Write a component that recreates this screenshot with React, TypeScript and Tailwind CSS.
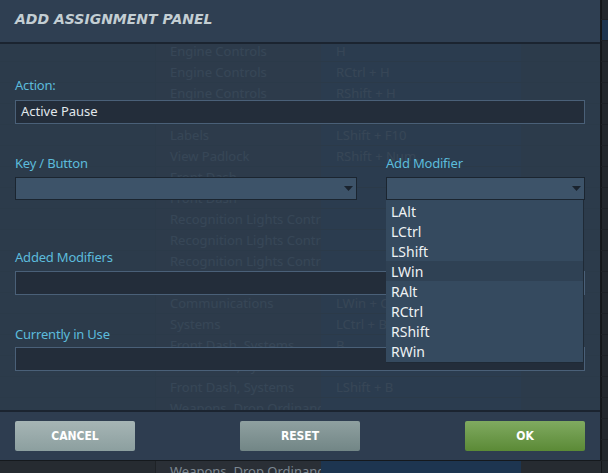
import React from "react";

const ghostRows: [string, string][] = [
  ["", ""],
  ["", ""],
  ["Engine Controls", "H"],
  ["Engine Controls", "RCtrl + H"],
  ["Engine Controls", "RShift + H"],
  ["Engine Controls", "LShift + H"],
  ["Labels", "LShift + F10"],
  ["View Padlock", "RShift + Num."],
  ["Front Dash", ""],
  ["Front Dash", ""],
  ["Recognition Lights Control", ""],
  ["Recognition Lights Control", ""],
  ["Recognition Lights Control", ""],
  ["Recognition Lights Control", ""],
  ["Communications", "LWin + C"],
  ["Systems", "LCtrl + B"],
  ["Front Dash, Systems", "B"],
  ["Front Dash, Systems", "LAlt + B"],
  ["Front Dash, Systems", "LShift + B"],
  ["Weapons, Drop Ordinance", ""],
  ["Weapons, Drop Ordinance", ""],
  ["Weapons, Drop Ordinance", ""],
  ["Weapons, Drop Ordinance", ""],
];

const modifiers = ["LAlt", "LCtrl", "LShift", "LWin", "RAlt", "RCtrl", "RShift", "RWin"];

const font = { fontFamily: '"Noto Sans", "DejaVu Sans", sans-serif' };

function Caret() {
  return (
    <svg width="9" height="5" viewBox="0 0 9 5" className="shrink-0">
      <path d="M0 0h9L4.5 5z" fill="#1a232e" />
    </svg>
  );
}

function Label({ children }: { children: React.ReactNode }) {
  return <div className="text-[13px] leading-none tracking-[-0.2px] text-[#5cbcdc]">{children}</div>;
}

export default function App() {
  return (
    <div className="relative w-[608px] h-[473px] overflow-hidden bg-[#23282d]" style={font}>
      {/* table behind the panel */}
      <div className="flex flex-col -mt-px">
        {ghostRows.map(([a, b], i) => (
          <div
            key={i}
            className="grid grid-cols-[155px_166px_200px_80px_7px] h-[21px] border-b border-[#1e2226] text-[13px] text-[#7c8791]"
          >
            <div className="bg-[#262b31]" />
            <div className="bg-[#2a2f36] border-l border-[#1e2226] pl-[14px] leading-[20px] whitespace-nowrap overflow-hidden">
              {a}
            </div>
            <div className="bg-[#1d3550] pl-[15px] leading-[20px] whitespace-nowrap overflow-hidden">{b}</div>
            <div className="bg-[#262b31]" />
            <div className={i === 1 ? "bg-[#1d3550] border-l border-[#14171a]" : "bg-[#23282d] border-l border-[#14171a]"} />
          </div>
        ))}
      </div>

      {/* panel */}
      <div className="absolute left-0 top-0 w-[601px] h-[461px] flex flex-col border-r border-b border-[#15191d]">
        <div className="h-[44px] shrink-0 bg-[#2f3f52] border-b-2 border-[#1b2430] pl-[15px] pt-[9px]">
          <div
            className="text-[14px] font-bold italic text-[#c3ced3]"
            style={{ fontFamily: '"DejaVu Sans", sans-serif' }}
          >
            ADD ASSIGNMENT PANEL
          </div>
        </div>

        <div className="flex-1 bg-[#2d3d4f]/[0.88] px-[15px] pt-[35px] flex flex-col">
          <Label>Action:</Label>
          <div className="mt-[8px] h-[24px] w-[570px] bg-[#232d3a] border border-[#4a6078] flex items-center pl-[5px] text-[13px] text-[#e2e8ec]">
            Active Pause
          </div>

          <div className="flex mt-[33px] gap-[29px]">
            <div className="w-[342px] flex flex-col">
              <Label>Key / Button</Label>
              <div className="mt-[7px] h-[23px] bg-[#3d5369] border border-[#1b2530] flex items-center justify-end pr-[3px]">
                <Caret />
              </div>
            </div>
            <div className="relative w-[199px] flex flex-col">
              <Label>Add Modifier</Label>
              <div className="mt-[7px] h-[23px] bg-[#3d5369] border border-[#1b2530] flex items-center justify-end pr-[3px]">
                <Caret />
              </div>
              <div className="absolute left-0 top-[43px] z-10 w-[198px] bg-[#354a5f] border-b border-r border-[#1f2a36] flex flex-col py-[1px]">
                {modifiers.map((m) => (
                  <div
                    key={m}
                    className={
                      "h-[20px] pl-[5px] flex items-center text-[14px] text-[#eef2f4] " +
                      (m === "LWin" ? "bg-[#2f4154]" : "")
                    }
                  >
                    {m}
                  </div>
                ))}
              </div>
            </div>
          </div>

          <div className="mt-[51px]">
            <Label>Added Modifiers</Label>
          </div>
          <div className="mt-[7px] h-[24px] w-[570px] bg-[#232d3a] border border-[#4a6078]" />

          <div className="mt-[33px]">
            <Label>Currently in Use</Label>
          </div>
          <div className="mt-[6px] h-[24px] w-[570px] bg-[#232d3a] border border-[#4a6078]" />
        </div>

        <div className="h-[50px] shrink-0 bg-[#2e3d50] border-t-2 border-[#1b2430] flex items-center justify-between px-[15px] pb-[1px]">
          {[
            ["CANCEL", "from-[#a6b5b5] to-[#8c9f9f]"],
            ["RESET", "from-[#8fa0a0] to-[#728686]"],
            ["OK", "from-[#80aa60] to-[#5b8a36]"],
          ].map(([t, g]) => (
            <button
              key={t}
              className={"w-[120px] h-[30px] rounded-[2px] bg-gradient-to-b text-white text-[12px] font-bold " + g}
              style={{ fontFamily: '"DejaVu Sans Condensed", "DejaVu Sans", sans-serif' }}
            >
              {t}
            </button>
          ))}
        </div>
      </div>
    </div>
  );
}
